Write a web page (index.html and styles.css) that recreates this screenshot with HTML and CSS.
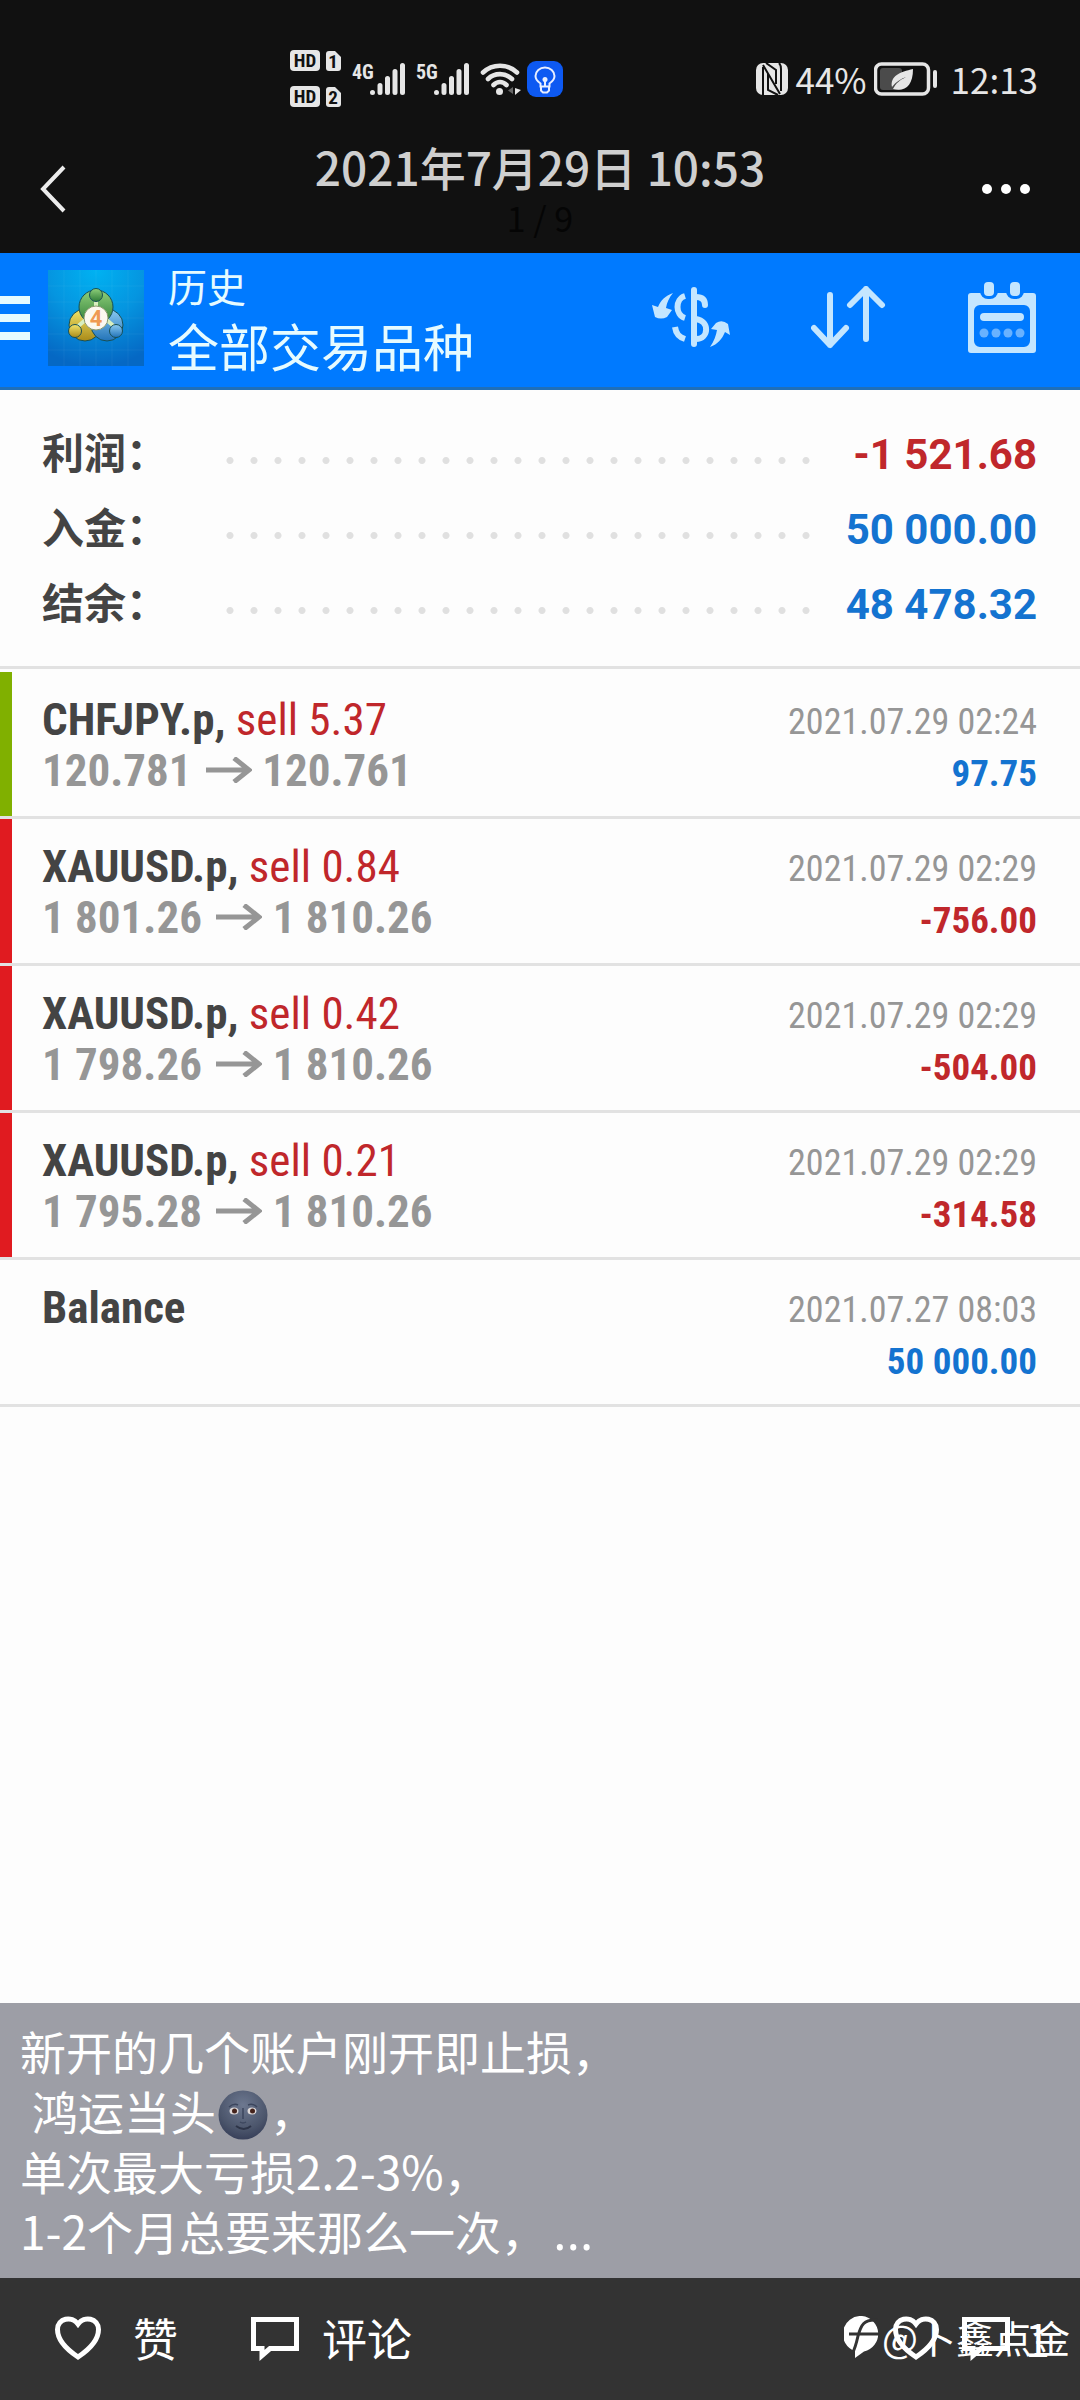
FILE: index.html
```html
<!DOCTYPE html>
<html lang="zh-CN">
<head>
<meta charset="utf-8">
<meta name="viewport" content="width=device-width, initial-scale=1">
<title>历史</title>
<link rel="stylesheet" href="styles.css">
</head>
<body>
<div class="page">
  <div class="status">
    <div class="status-group">
      <svg class="hd" width="52" height="76" viewBox="0 -8 52 76" aria-hidden="true">
        <rect x="0" y="1" width="30" height="21" rx="4" fill="#e6e6e6"/>
        <path d="M36 5a3 3 0 0 1 3-3h6l6 6v11a3 3 0 0 1-3 3h-9a3 3 0 0 1-3-3z" fill="#e6e6e6"/>
        <rect x="0" y="37" width="30" height="21" rx="4" fill="#e6e6e6"/>
        <path d="M36 41a3 3 0 0 1 3-3h6l6 6v11a3 3 0 0 1-3 3h-9a3 3 0 0 1-3-3z" fill="#e6e6e6"/>
        <g class="hd-text" text-anchor="middle">
          <text x="15" y="18">HD</text><text x="43" y="19">1</text>
          <text x="15" y="54">HD</text><text x="43" y="55">2</text>
        </g>
      </svg>
      <svg width="54" height="44" viewBox="0 -4 54 44" aria-hidden="true">
        <text class="net" x="0" y="18">4G</text>
        <path d="M20.500 31.500v0M28 24.500v7M35.500 17.500v14M43 10.500v21M50.500 4.500v27" stroke="#e6e6e6" stroke-width="5" stroke-linecap="round"/>
      </svg>
      <svg width="54" height="44" viewBox="0 -4 54 44" aria-hidden="true">
        <text class="net" x="0" y="18">5G</text>
        <path d="M20.500 31.500v0M28 24.500v7M35.500 17.500v14M43 10.500v21M50.500 4.500v27" stroke="#e6e6e6" stroke-width="5" stroke-linecap="round"/>
      </svg>
      <svg width="41" height="36" viewBox="0 0 41 36" fill="none" stroke="#e6e6e6" stroke-width="4.600" stroke-linecap="round" aria-hidden="true">
        <path d="M3 11.500c9.500-9 24.500-9 34 0M8 18c6.500-6.500 17.500-6.500 24 0M13.500 24c4-4 9-4 13 0"/>
        <circle cx="19.500" cy="30.500" r="3.500" fill="#e6e6e6" stroke="none"/>
        <path d="M33 26v7l-5-3.500z" fill="#666" stroke="none"/>
        <path d="M35 34v-7l6 2z" fill="#e6e6e6" stroke="none"/>
      </svg>
      <svg width="36" height="36" viewBox="0 0 36 36" fill="none" stroke="#e8eeff" stroke-width="2" aria-hidden="true">
        <rect width="36" height="36" rx="9" fill="#0d59f2" stroke="none"/>
        <path d="M13.500 25.500v-3c-3-2-5-4.500-5-7.500a9.500 8.500 0 0 1 19 0c0 3-2 5.500-5 7.500v3zM14 25.500v4l2 2h4l2-2v-4M18 19v6.500"/>
        <circle cx="18" cy="18.500" r="2.500" fill="#e8eeff" stroke="none"/>
      </svg>
    </div>
    <div class="status-group status-right">
      <svg width="32" height="32" viewBox="0 0 32 32" aria-hidden="true">
        <rect width="32" height="32" rx="7" fill="#e6e6e6"/>
        <path d="M7 4v28M7 2l17 29M25 28V6q0-4-2-6M12 11v16l10 5M10 0l10 7v14" fill="none" stroke="#111" stroke-width="2"/>
      </svg>
      <span class="pct">44%</span>
      <svg width="64" height="34" viewBox="0 0 64 34" aria-hidden="true">
        <rect x="1.500" y="2" width="53" height="30" rx="6" fill="none" stroke="#e6e6e6" stroke-width="3.500"/>
        <rect x="6" y="6" width="22" height="22" rx="3" fill="#4b4b4b"/>
        <rect x="59" y="8" width="4" height="18" rx="2" fill="#e6e6e6"/>
        <path d="M39 7C26 10 16 14 18 25c4-5 8-8 14-10-6 3-10 6-13 12 12 3 20-3 20-20z" fill="#e6e6e6"/>
      </svg>
      <span class="clock">12:13</span>
    </div>
  </div>

  <header class="viewer">
    <button class="icon-btn" type="button" aria-label="返回">
      <svg width="26" height="48" viewBox="0 0 26 48"><path d="M24 2 3 24l21 22" fill="none" stroke="#ececec" stroke-width="4"/></svg>
    </button>
    <div class="viewer-title">
      <h1>2021年7月29日 10:53</h1>
      <p>1 / 9</p>
    </div>
    <button class="icon-btn more" type="button" aria-label="更多">
      <svg width="48" height="12" viewBox="0 0 48 12" fill="#fff"><circle cx="5" cy="6" r="5"/><circle cx="24" cy="6" r="5"/><circle cx="43" cy="6" r="5"/></svg>
    </button>
  </header>

  <section class="appbar">
    <button class="icon-btn" type="button" aria-label="菜单">
      <svg width="30" height="44" viewBox="0 0 30 44" fill="#e6fbff"><path d="M0 0h30v8H0zM0 18h30v8H0zM0 36h30v8H0z"/></svg>
    </button>
    <svg class="app-logo" width="96" height="96" viewBox="0 0 96 96" aria-hidden="true">
      <defs>
        <radialGradient id="sky" cx=".5" cy="0" r="1"><stop offset="0" stop-color="#00b2f2"/><stop offset=".5" stop-color="#0595e0"/><stop offset="1" stop-color="#0568c4"/></radialGradient>
        <linearGradient id="green" x2="0" y2="1"><stop offset="0" stop-color="#8fd07a"/><stop offset="1" stop-color="#2f7d38"/></linearGradient>
        <linearGradient id="gold" x2="0" y2="1"><stop offset="0" stop-color="#f3e56b"/><stop offset="1" stop-color="#a98a18"/></linearGradient>
        <linearGradient id="blue" x2="0" y2="1"><stop offset="0" stop-color="#8ccbf2"/><stop offset="1" stop-color="#2273b8"/></linearGradient>
      </defs>
      <rect width="96" height="96" fill="url(#sky)"/>
      <path d="M16 0v96M32 0v96M48 0v96M64 0v96M80 0v96M0 16h96M0 32h96M0 48h96M0 64h96M0 80h96" stroke="#fff" stroke-opacity=".05"/>
      <g stroke="#174f56" stroke-width="1">
        <circle cx="37" cy="55" r="16" fill="url(#gold)"/>
        <circle cx="59" cy="55" r="16" fill="url(#blue)"/>
        <circle cx="48" cy="37" r="17" fill="url(#green)"/>
        <path d="M42 46 28 58M54 46l14 12M48 42V27" stroke="#d8eec0" stroke-width="4"/>
        <circle cx="48" cy="25" r="6.500" fill="url(#green)"/>
        <circle cx="27" cy="61" r="6.500" fill="url(#gold)"/>
        <circle cx="68" cy="61" r="6.500" fill="url(#blue)"/>
      </g>
      <circle cx="48" cy="48" r="12" fill="#fbf8f0" stroke="#8a9a70"/>
      <text class="logo-num" x="48" y="56" text-anchor="middle">4</text>
    </svg>
    <div class="appbar-title">
      <h2>历史</h2>
      <p>全部交易品种</p>
    </div>
    <div class="tools">
      <button class="icon-btn" type="button" aria-label="交易品种">
        <svg width="80" height="64" viewBox="0 0 80 64" fill="none" stroke="#c4e6ff" stroke-width="6">
          <path d="M43 4v54" stroke-linecap="round"/>
          <path d="M34 10c-10 3-10 19 0 22M24 41c1 7 4 10 10 12"/>
          <path d="M45 11c5 0 9 2 9 8" stroke-linecap="round"/>
          <path d="M45 33c14 2 13 20 0 20"/>
          <path d="M22 7C14 10 10 14 7 21l-6-2 3 12q6 3 12 0l5-7-6-2c1-6 3-10 7-15zM59 61c8-3 12-8 15-15l5 3-2-11q-6-5-12-1l-5 6 6 1c-1 6-3 11-7 17z" fill="#c4e6ff" stroke="none"/>
        </svg>
      </button>
      <button class="icon-btn" type="button" aria-label="排序">
        <svg width="76" height="64" viewBox="0 0 76 64" fill="none" stroke="#c4e6ff" stroke-width="6" stroke-linecap="round" stroke-linejoin="round"><path d="M19 9v50M3 42l16 17 16-17M55 53V3M39 19 55 3l16 16"/></svg>
      </button>
      <button class="icon-btn" type="button" aria-label="日期">
        <svg width="70" height="72" viewBox="0 0 70 72">
          <path fill-rule="evenodd" d="M4 11h62a3 3 0 0 1 3 3v54a3 3 0 0 1-3 3H4a3 3 0 0 1-3-3V14a3 3 0 0 1 3-3zm9 12a6 6 0 0 0-6 6v30a6 6 0 0 0 6 6h44a6 6 0 0 0 6-6V29a6 6 0 0 0-6-6z" fill="#c4e6ff"/>
          <rect x="13" y="-3" width="18" height="20" rx="8" fill="#007aff"/><rect x="39" y="-3" width="18" height="20" rx="8" fill="#007aff"/>
          <rect x="17" y="0" width="10" height="14" rx="4" fill="#c4e6ff"/><rect x="43" y="0" width="10" height="14" rx="4" fill="#c4e6ff"/>
          <rect x="13" y="31" width="44" height="8" rx="4" fill="#c4e6ff"/>
          <g fill="#69b2ff"><circle cx="17" cy="51" r="4.500"/><circle cx="29" cy="51" r="4.500"/><circle cx="41" cy="51" r="4.500"/><circle cx="53" cy="51" r="4.500"/></g>
        </svg>
      </button>
    </div>
  </section>

  <main class="history">
    <dl class="summary">
      <div class="sum-row"><dt>利润：</dt><dd class="loss">-1 521.68</dd></div>
      <div class="sum-row"><dt>入金：</dt><dd class="gain">50 000.00</dd></div>
      <div class="sum-row"><dt>结余：</dt><dd class="gain">48 478.32</dd></div>
    </dl>
    <ul class="deals">
      <li class="deal deal-up">
        <div class="deal-main"><p><b>CHFJPY.p,</b> <span class="loss">sell 5.37</span></p><p class="price">120.781 <svg class="arrow" viewBox="0 0 46 26" role="img" aria-label="至"><path d="M0 13h43M28 1l15 12-15 12"/></svg> 120.761</p></div>
        <div class="deal-side"><time>2021.07.29 02:24</time><b class="gain">97.75</b></div>
      </li>
      <li class="deal deal-down">
        <div class="deal-main"><p><b>XAUUSD.p,</b> <span class="loss">sell 0.84</span></p><p class="price">1 801.26 <svg class="arrow" viewBox="0 0 46 26" role="img" aria-label="至"><path d="M0 13h43M28 1l15 12-15 12"/></svg> 1 810.26</p></div>
        <div class="deal-side"><time>2021.07.29 02:29</time><b class="loss">-756.00</b></div>
      </li>
      <li class="deal deal-down">
        <div class="deal-main"><p><b>XAUUSD.p,</b> <span class="loss">sell 0.42</span></p><p class="price">1 798.26 <svg class="arrow" viewBox="0 0 46 26" role="img" aria-label="至"><path d="M0 13h43M28 1l15 12-15 12"/></svg> 1 810.26</p></div>
        <div class="deal-side"><time>2021.07.29 02:29</time><b class="loss">-504.00</b></div>
      </li>
      <li class="deal deal-down">
        <div class="deal-main"><p><b>XAUUSD.p,</b> <span class="loss">sell 0.21</span></p><p class="price">1 795.28 <svg class="arrow" viewBox="0 0 46 26" role="img" aria-label="至"><path d="M0 13h43M28 1l15 12-15 12"/></svg> 1 810.26</p></div>
        <div class="deal-side"><time>2021.07.29 02:29</time><b class="loss">-314.58</b></div>
      </li>
      <li class="deal">
        <div class="deal-main"><p><b>Balance</b></p></div>
        <div class="deal-side"><time>2021.07.27 08:03</time><b class="gain">50 000.00</b></div>
      </li>
    </ul>
  </main>

  <section class="caption">
    <p>新开的几个账户刚开即止损，</p>
    <p class="indent">鸿运当头<svg class="moon" viewBox="0 0 50 50" role="img" aria-label="新月脸">
      <defs><radialGradient id="moon" cx=".5" cy=".3" r=".7"><stop offset="0" stop-color="#6d7890"/><stop offset=".7" stop-color="#4c566c"/><stop offset="1" stop-color="#38405a"/></radialGradient></defs>
      <circle cx="25" cy="25" r="24.500" fill="url(#moon)"/>
      <path d="M11 17q5-4 9-2M30 15q5-2 9 2M25 18v11M22 32q3 2 6 0" fill="none" stroke="#3c465e" stroke-width="1.500"/>
      <path d="M18 36q8 6 15 0" fill="none" stroke="#2d3448" stroke-width="2"/>
      <ellipse cx="16" cy="21" rx="4.500" ry="3.500" fill="#ded8d8"/><ellipse cx="34" cy="21" rx="4.500" ry="3.500" fill="#ded8d8"/>
      <circle cx="16.500" cy="21" r="2.500" fill="#44231c"/><circle cx="34.500" cy="21" r="2.500" fill="#44231c"/>
    </svg>，</p>
    <p>单次最大亏损2.2-3%，</p>
    <p>1-2个月总要来那么一次，<span class="dots">…</span></p>
  </section>

  <footer class="actions">
    <button class="action" type="button">
      <svg class="glyph" viewBox="0 0 50 46"><path d="M25 42C16 36 4.500 26 4.500 14.500 4.500 3 19 .5 25 9c6-8.500 20.500-6 20.500 5.500C45.500 26 34 36 25 42z"/></svg>
      <span>赞</span>
    </button>
    <button class="action" type="button">
      <svg class="glyph" viewBox="0 0 50 46"><path d="M3.500 4.500h43v29H20l-8 7v-7H3.500z"/></svg>
      <span>评论</span>
    </button>
    <div class="counts">
      <svg class="glyph" viewBox="0 0 50 46" aria-hidden="true"><path d="M25 42C16 36 4.500 26 4.500 14.500 4.500 3 19 .5 25 9c6-8.500 20.500-6 20.500 5.500C45.500 26 34 36 25 42z"/></svg>
      <svg class="glyph" viewBox="0 0 50 46" aria-hidden="true"><path d="M3.500 4.500h43v29H20l-8 7v-7H3.500z"/></svg>
      <span class="count">1</span>
      <div class="watermark">
        <svg width="36" height="42" viewBox="0 0 36 42" aria-hidden="true">
          <path d="M18 0a18 18 0 0 1 2 35.500L11 42v-7A18 18 0 0 1 18 0z" fill="#fff"/>
          <path d="M33 4C20 3 17 9 14 20 12 29 11 33 8 38M5 18h30" fill="none" stroke="#333" stroke-width="3"/>
        </svg>
        <span>@卜鑫点金</span>
      </div>
    </div>
  </footer>
</div>
</body>
</html>
```
FILE: styles.css
```css
* { box-sizing: border-box; margin: 0; padding: 0; }
body { font-family: Roboto, "Noto Sans CJK SC", sans-serif; background: #fdfdfd; }
button { border: 0; background: none; color: inherit; font: inherit; cursor: pointer; }
svg { display: block; flex: none; }
ul { list-style: none; }
.page { min-height: 100vh; display: flex; flex-direction: column; }
.icon-btn { display: flex; flex: none; }

/* phone status bar */
.status { display: flex; justify-content: space-between; align-items: center; height: 124px; padding: 34px 42px 0 290px; background: #111; color: #e6e6e6; }
.status-group { display: flex; align-items: center; gap: 10px; }
.status-group + .status-right { gap: 7px; }
.status-group svg:nth-child(5) { margin-left: -4px; }
.hd-text { font: 700 19px "Roboto Condensed", sans-serif; fill: #111; }
.net { font: 700 20px "Roboto Condensed", sans-serif; fill: #e6e6e6; }
.pct, .clock { font: 400 35px/40px "Noto Sans CJK SC", sans-serif; }
.clock { margin-left: 6px; }

/* picture viewer header */
.viewer { display: grid; grid-template-columns: 1fr auto 1fr; align-items: center; height: 129px; padding: 0 50px 0 40px; background: #111; }
.viewer .more { justify-self: end; }
.viewer-title { padding: 0 0 6px 10px; text-align: center; font-family: "Noto Sans CJK SC", sans-serif; }
.viewer-title h1 { font-size: 46px; line-height: 64px; font-weight: 500; color: #cfcfcf; }
.viewer-title p { font-size: 34px; line-height: 40px; color: #050505; }

/* application bar */
.appbar { display: flex; align-items: center; height: 137px; padding: 0 43px 4px 0; background: #007aff; border-bottom: 3px solid #1f6fb8; color: #e6fbff; }
.app-logo { margin: 0 24px 0 18px; }
.logo-num { font: 700 22px Roboto, sans-serif; fill: #ef9a52; }
.appbar-title { flex: 1; padding-bottom: 3px; font-family: "Noto Sans CJK SC", sans-serif; }
.appbar-title h2 { font-size: 39px; line-height: 56px; font-weight: 400; }
.appbar-title p { font-size: 51px; line-height: 64px; }
.tools { display: flex; align-items: center; gap: 80px; }

/* account totals */
.history { flex: 1; }
.summary { padding: 27px 43px 24px 42px; border-bottom: 3px solid #e2e2e2; }
.sum-row { display: flex; justify-content: space-between; align-items: center; font-size: 42px; line-height: 75px; background: radial-gradient(circle 4px, #e0e0e0 3px, transparent 4px) 176px 6px / 24px 75px; }
.sum-row dt, .sum-row dd { height: 75px; background: #fdfdfd; font-weight: 700; }
.sum-row dt { width: 176px; color: #444; }
.sum-row dd { width: 219px; text-align: right; }
.gain { color: #1473d0; }
.loss { color: #c0272b; }

/* deals */
.deals { padding-top: 3px; font-family: "Roboto Condensed", "Liberation Sans Narrow", Roboto, sans-serif; }
.deal { display: flex; justify-content: space-between; padding: 22px 43px 20px 42px; border-bottom: 3px solid #e2e2e2; position: relative; }
.deal::before { content: ""; position: absolute; left: 0; top: 0; bottom: 0; width: 12px; }
.deal-up::before { background: #80b000; }
.deal-down::before { background: #e01b20; }
.deal-main { font-size: 45px; line-height: 51px; color: #444; }
.price { color: #969696; font-weight: 700; }
.arrow { display: inline-block; width: 46px; height: 26px; margin: 0 0 0 4px; vertical-align: 3px; fill: none; stroke: #969696; stroke-width: 5; }
.deal-side { display: flex; flex-direction: column; align-items: flex-end; padding-top: 3px; margin-bottom: -3px; font-size: 37px; line-height: 51px; }
.deal-side time { font-size: 36px; color: #969696; }

/* caption and actions */
.caption { padding: 17px 20px 18px; background: #9d9ea6; color: #fff; font: 400 46px/60px "Noto Sans CJK SC", sans-serif; }
.indent { padding-left: 12px; }
.dots { margin-left: 6px; font-family: "Open Sans", sans-serif; font-size: 52px; line-height: 1; }
.moon { display: inline-block; width: 50px; height: 50px; margin: 0 2px; vertical-align: -10px; }
.actions { display: flex; align-items: center; gap: 72px; height: 122px; padding: 0 30px 2px 53px; background: #333; color: #fff; font: 400 45px/60px "Noto Sans CJK SC", sans-serif; }
.action { display: flex; align-items: center; gap: 30px; }
.action + .action { gap: 22px; }
.glyph { width: 50px; height: 46px; fill: none; stroke: #fff; stroke-width: 5; }
.counts { display: flex; align-items: center; gap: 20px; margin-left: auto; position: relative; }
.count { margin-left: -6px; }
.watermark { position: absolute; right: -20px; display: flex; align-items: center; gap: 2px; font-size: 38px; line-height: 56px; padding-bottom: 2px; white-space: nowrap; }
```
